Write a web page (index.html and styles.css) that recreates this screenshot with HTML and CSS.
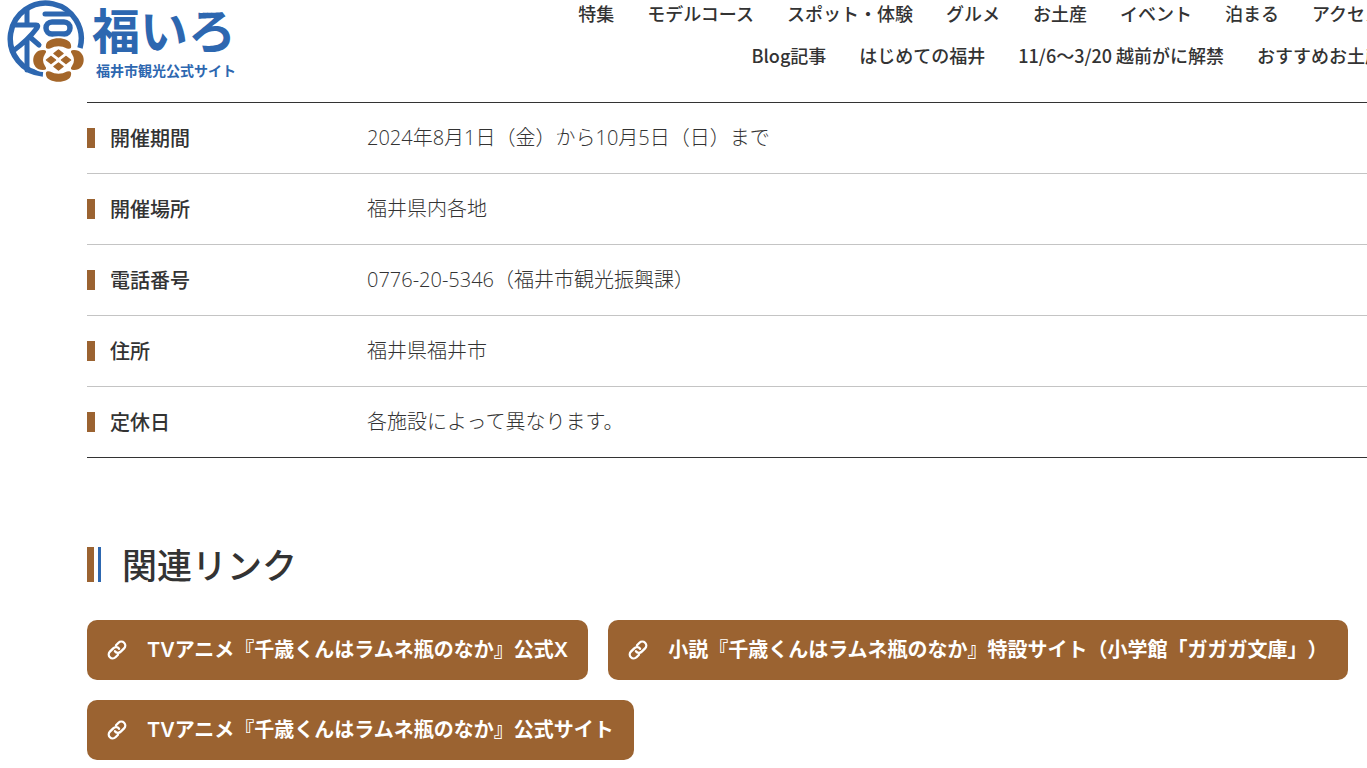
FILE: index.html
```html
<!DOCTYPE html>
<html lang="ja">
<head>
<meta charset="utf-8">
<meta name="viewport" content="width=device-width, initial-scale=1">
<title>福いろ 福井市観光公式サイト</title>
<link rel="stylesheet" href="styles.css">
</head>
<body>
<svg class="sprite" aria-hidden="true">
  <symbol id="link" viewBox="0 0 24 24">
    <g fill="none" stroke="currentColor" stroke-width="2.8" stroke-linecap="round" stroke-linejoin="round">
      <path d="M9.500 13.500a4.600 4.600 0 0 0 7 .5l4-4a4.700 4.700 0 0 0-6.700-6.700l-3 3"/>
      <path d="M14.500 10.500a4.600 4.600 0 0 0-7-.5l-4 4a4.700 4.700 0 0 0 6.700 6.700l3-3"/>
    </g>
  </symbol>
</svg>
<header class="header">
  <a class="logo" href="#">
    <svg class="logo-mark" viewBox="0 0 90 90" aria-hidden="true">
      <g fill="none" stroke="#2d67b0" stroke-width="5.5" stroke-linecap="round" stroke-linejoin="round">
        <path stroke-linecap="butt" d="M43 74A35.500 35.500 0 1 1 80 48"/>
        <path stroke-width="5" d="M27 10V24M15 25H36Q39 25 37 28Q28 40 13 51M27 40V70M31 38L39 45M45 14H70"/>
        <rect x="46" y="22" width="24" height="12" rx="6"/>
      </g>
      <g fill="#a46629" stroke="#fff" stroke-width="4" stroke-linejoin="round" paint-order="stroke">
        <path id="petal-top" d="M46 45C47 36 70 36 71 45Q72 50 67 48.500Q58.500 44 50 48.500Q45 50 46 45Z"/>
        <path d="M46 75C47 84 70 84 71 75Q72 70 67 71.500Q58.500 76 50 71.500Q45 70 46 75Z"/>
        <path d="M43 50C30 50 30 70 43 70Q48 70 45 66Q41 60 45 54Q48 50 43 50Z"/>
        <path d="M74 50C87 50 87 70 74 70Q69 70 72 66Q76 60 72 54Q69 50 74 50Z"/>
      </g>
      <ellipse cx="58.500" cy="60" rx="14" ry="12.500" fill="#fff"/>
      <path fill="#a46629" stroke="#a46629" stroke-width="1.500" stroke-linejoin="round" d="M58.500 50l4.500 3.500-4.500 3.500-4.500-3.500zM58.500 63l4.500 3.500-4.500 3.500-4.500-3.500zM51 56.500l4.500 3.500-4.500 3.500-4.500-3.500zM66 56.500l4.500 3.500-4.500 3.500-4.500-3.500z"/>
    </svg>
    <span class="logo-text">
      <span class="logo-name">福いろ</span>
      <span class="logo-sub">福井市観光公式サイト</span>
    </span>
  </a>
  <nav class="nav" aria-label="メインメニュー">
    <ul class="nav-row">
      <li><a href="#">特集</a></li>
      <li><a href="#">モデルコース</a></li>
      <li><a href="#">スポット・体験</a></li>
      <li><a href="#">グルメ</a></li>
      <li><a href="#">お土産</a></li>
      <li><a href="#">イベント</a></li>
      <li><a href="#">泊まる</a></li>
      <li><a href="#">アクセス</a></li>
    </ul>
    <ul class="nav-row">
      <li><a href="#">Blog記事</a></li>
      <li><a href="#">はじめての福井</a></li>
      <li><a href="#">11/6～3/20 越前がに解禁</a></li>
      <li><a href="#">おすすめお土産</a></li>
    </ul>
  </nav>
</header>
<main class="main">
  <table class="info">
    <tbody>
      <tr><th scope="row"><span class="label">開催期間</span></th><td>2024年8月1日（金）から10月5日（日）まで</td></tr>
      <tr><th scope="row"><span class="label">開催場所</span></th><td>福井県内各地</td></tr>
      <tr><th scope="row"><span class="label">電話番号</span></th><td>0776-20-5346（福井市観光振興課）</td></tr>
      <tr><th scope="row"><span class="label">住所</span></th><td>福井県福井市</td></tr>
      <tr><th scope="row"><span class="label">定休日</span></th><td>各施設によって異なります。</td></tr>
    </tbody>
  </table>
  <h2 class="heading">関連リンク</h2>
  <div class="links">
    <a class="button" href="#"><svg class="icon" aria-hidden="true"><use href="#link"/></svg>TVアニメ『千歳くんはラムネ瓶のなか』公式X</a>
    <a class="button" href="#"><svg class="icon" aria-hidden="true"><use href="#link"/></svg>小説『千歳くんはラムネ瓶のなか』特設サイト（小学館「ガガガ文庫」）</a>
    <a class="button" href="#"><svg class="icon" aria-hidden="true"><use href="#link"/></svg>TVアニメ『千歳くんはラムネ瓶のなか』公式サイト</a>
  </div>
</main>
</body>
</html>
```
FILE: styles.css
```css
:root {
  --brown: #9b6331;
  --blue: #2d67b0;
  --text: #333;
}

* {
  box-sizing: border-box;
}

body {
  margin: 0;
  overflow-x: hidden;
  background: #fff;
  color: var(--text);
  font-family: "Noto Sans CJK JP", sans-serif;
  font-size: 20px;
  line-height: 30px;
  text-spacing-trim: space-all;
}

a {
  color: inherit;
  text-decoration: none;
}

.sprite {
  display: none;
}

.header {
  display: flex;
  justify-content: space-between;
  height: 102px;
}

.logo {
  display: flex;
  flex: none;
  height: 90px;
  color: var(--blue);
  font-weight: 700;
  white-space: nowrap;
}

.logo-mark {
  width: 90px;
  height: 90px;
}

.logo-text {
  display: flex;
  flex-direction: column;
  gap: 4px;
}

.logo-name {
  padding-left: 2px;
  font-size: 48px;
  line-height: 56px;
}

.logo-sub {
  padding-left: 6px;
  font-size: 14px;
  line-height: 20px;
}

.nav {
  flex: none;
  margin-right: -16px;
  font-size: 18px;
  font-weight: 500;
  line-height: 26px;
  white-space: nowrap;
}

.nav-row {
  display: flex;
  justify-content: flex-end;
  gap: 33px;
  margin: 0 0 16px;
  padding: 0;
  list-style: none;
}

.main {
  padding-left: 87px;
}

.info {
  width: 100%;
  border-collapse: collapse;
  border-top: 1px solid var(--text);
  border-bottom: 1px solid var(--text);
}

.info tr + tr {
  border-top: 1px solid #c4c4c4;
}

.info th {
  width: 280px;
  padding: 20px 0;
  font-weight: 500;
  text-align: left;
}

.info td {
  padding: 20px 0;
  font-family: "Open Sans", "Noto Sans CJK JP", sans-serif;
  font-weight: 300;
}

.label {
  display: flex;
  align-items: center;
  gap: 15px;
}

.label::before {
  content: "";
  width: 8px;
  height: 20px;
  background: var(--brown);
}

.heading {
  display: flex;
  align-items: center;
  margin: 86px 0 36px;
  font-size: 35px;
  font-weight: 500;
  line-height: 40px;
}

.heading::before {
  content: "";
  width: 14px;
  height: 35px;
  margin-right: 21px;
  background: linear-gradient(to right, var(--brown) 7px, #fff 7px 11px, var(--blue) 11px);
}

.links {
  display: flex;
  flex-wrap: wrap;
  gap: 20px;
  padding-bottom: 8px;
}

.button {
  display: flex;
  align-items: center;
  gap: 20px;
  padding: 15px 20px;
  border-radius: 10px;
  background: var(--brown);
  color: #fff;
  font-family: Inter, "Noto Sans CJK JP", sans-serif;
  font-weight: 600;
}

.icon {
  flex: none;
  width: 20px;
  height: 20px;
}
```
